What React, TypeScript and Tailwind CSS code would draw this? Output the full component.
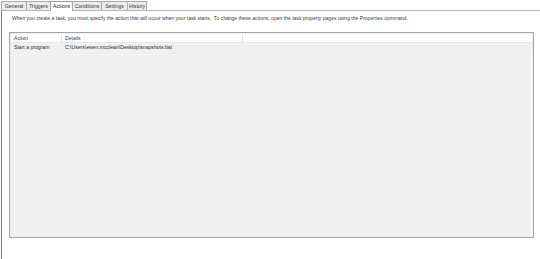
import React from 'react';

const tabs = [
  { label: 'General', w: 'w-[26px]' },
  { label: 'Triggers', w: 'w-[25px]' },
  { label: 'Actions', w: 'w-[23px]' },
  { label: 'Conditions', w: 'w-[30px]' },
  { label: 'Settings', w: 'w-[27px]' },
  { label: 'History', w: 'w-[20px]' },
];

export default function App() {
  const active = 'Actions';
  return (
    <div className="w-[540px] h-[259px] bg-white flex flex-col overflow-hidden" style={{ fontFamily: '"Liberation Sans", Arial, sans-serif' }}>
      {/* tab strip */}
      <div className="flex items-end h-[10px] pl-[1px] relative z-10">
        {tabs.map((t) => (
          <div
            key={t.label}
            className={
              t.label === active
                ? `${t.w} h-[10px] bg-white border border-b-0 border-[#9a9a9a] -ml-px text-center text-[5.2px] leading-[8px] text-[#222] -mb-px`
                : `${t.w} h-[9px] bg-[#ececec] border border-b-0 border-[#a9a9a9] -ml-px first:ml-0 text-center text-[5.2px] leading-[8px] text-[#333]`
            }
          >
            {t.label}
          </div>
        ))}
      </div>

      {/* panel */}
      <div className="flex-1 flex flex-col border-t border-l border-t-[#b4b4b4] border-l-[#7d7d7d] ml-[1px] bg-white">
        <p className="mt-[4px] ml-[10px] text-[5.05px] leading-[7px] text-[#3a3a3a] whitespace-nowrap">
          When you create a task, you must specify the action that will occur when your task starts.&nbsp; To change these actions, open the task property pages using the Properties command.
        </p>

        {/* actions list */}
        <div className="mt-[10px] ml-[7px] w-[525px] h-[206px] border border-[#a4a4a4] bg-[#f0f0f0] flex flex-col p-px">
          <div className="flex h-[9px] bg-white border-b border-[#e6e6e6] text-[5.1px] leading-[9px] text-[#3a3a3a]">
            <div className="w-[51px] pl-[3px] border-r border-[#e2e2e2]">Action</div>
            <div className="w-[181px] pl-[3px] border-r border-[#e2e2e2]">Details</div>
            <div className="flex-1" />
          </div>
          <div className="flex h-[8px] text-[5.1px] leading-[8px] text-[#2a2a2a]">
            <div className="w-[51px] pl-[3px] whitespace-nowrap">Start a program</div>
            <div className="pl-[3px] whitespace-nowrap">C:\Users\ewen.mcclean\Desktop\snapshots.bat</div>
          </div>
          <div className="flex-1 border-r border-[#fafafa]" />
        </div>
      </div>
    </div>
  );
}
